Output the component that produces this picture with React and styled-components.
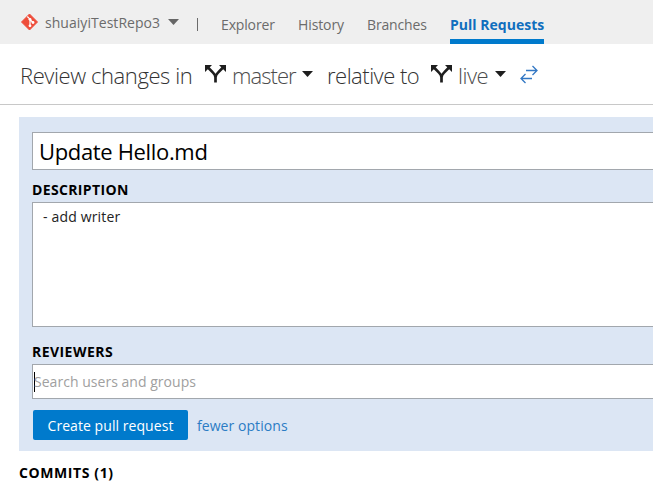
import React from "react";
import styled, { createGlobalStyle } from "styled-components";

const GlobalStyle = createGlobalStyle`
  * { box-sizing: border-box; }
  body {
    margin: 0;
    background: #fff;
    color: #000;
    font: 14px/20px "Open Sans", "Noto Sans", sans-serif;
    overflow: hidden;
  }
`;

const Page = styled.div`
  height: 493px;
  overflow: hidden;
`;

const TopBar = styled.header`
  display: flex;
  height: 44px;
  padding-left: 21px;
  background: #efefef;
  color: #6b6b6b;
  white-space: nowrap;
`;

const RepoPicker = styled.div`
  display: flex;
  width: 175px;
  padding-top: 13px;
  svg { flex: none; }
`;

const RepoName = styled.span`
  width: 123px;
  margin-left: 7px;
  letter-spacing: 0.04px;
  line-height: 20px;
`;

const RepoCaret = styled.svg`
  margin-top: 6px;
`;

const Divider = styled.span`
  width: 1px;
  height: 13px;
  margin: 18px 23px 0 1px;
  background: #6b6b6b;
`;

const Tab = styled.a`
  width: ${(p) => p.$width}px;
  height: 44px;
  margin-right: 23px;
  padding-top: 15px;
  letter-spacing: ${(p) => p.$tracking}px;
  color: ${(p) => (p.$active ? "#106ebe" : "#6b6b6b")};
  font-weight: ${(p) => (p.$active ? 700 : 400)};
  border-bottom: ${(p) => (p.$active ? "5px solid #007acc" : "0")};
`;

const CompareBar = styled.h1`
  display: flex;
  height: 61px;
  margin: 0;
  padding: 15px 0 0 20px;
  border-bottom: 1px solid #c8c8c8;
  font-size: 22px;
  line-height: 32px;
  font-weight: 300;
  color: #333;
  white-space: nowrap;
  svg { flex: none; }
`;

const Phrase = styled.span`
  width: ${(p) => p.$width}px;
  letter-spacing: ${(p) => p.$tracking}px;
`;

const BranchName = styled(Phrase)`
  color: #4c4c4c;
`;

const BranchSvg = styled.svg`
  margin: 6px 6px 0 0;
`;

const BranchCaret = styled.svg`
  margin: 12px 14px 0 0;
`;

const SwapSvg = styled.svg`
  margin-top: 6px;
`;

const Panel = styled.section`
  height: 334px;
  margin: 12px 0 0 19px;
  padding: 15px 0 0 13px;
  background: #dce6f4;
`;

const Field = styled.div`
  height: ${(p) => p.$height}px;
  background: #fff;
  border: 1px solid #a2a7ad;
  border-right: 0;
  white-space: nowrap;
`;

const TitleField = styled(Field)`
  padding-left: 6px;
  font-size: 22px;
  line-height: 36px;
  letter-spacing: -0.34px;
`;

const DescriptionField = styled(Field)`
  padding: 4px 10px;
  color: #222;
  letter-spacing: 0.17px;
`;

const SearchField = styled(Field)`
  display: flex;
  align-items: center;
  padding-left: 1px;
  color: #a0a0a0;
  letter-spacing: 0.03px;
`;

const TextCursor = styled.span`
  width: 1px;
  height: 20px;
  margin-right: -1px;
  background: #000;
`;

const Label = styled.h2`
  margin: 0;
  height: ${(p) => p.$height}px;
  padding-top: ${(p) => p.$top}px;
  font-size: 14px;
  line-height: 20px;
  font-weight: 700;
  letter-spacing: ${(p) => p.$tracking}px;
`;

const Actions = styled.div`
  display: flex;
  align-items: center;
  gap: 9px;
  padding: 11px 0 0 1px;
`;

const PrimaryButton = styled.button`
  width: 155px;
  height: 30px;
  padding: 2px 0 0;
  border: 0;
  border-radius: 2px;
  background: #007acc;
  color: #fff;
  font: inherit;
  letter-spacing: 0.06px;
`;

const OptionsLink = styled.a`
  padding-top: 2px;
  color: #2b7cc4;
  letter-spacing: 0.06px;
`;

const Commits = styled.section`
  padding-left: 19px;
`;

const GitLogo = () => (
  <svg width="17" height="18" viewBox="0 0 17 18">
    <path d="M8.5 1 16.5 9 8.5 17 .5 9Z" fill="#ee4d3a" stroke="#ee4d3a" strokeLinejoin="round" />
    <path d="M6.3 3.5 9 6.2V13M9 6.5l3 3" fill="none" stroke="#fff" strokeWidth="1.2" />
    <circle cx="9" cy="6.3" r="1.4" fill="#fff" />
    <circle cx="9" cy="12.8" r="1.4" fill="#fff" />
    <circle cx="12" cy="9.5" r="1.4" fill="#fff" />
  </svg>
);

const BranchIcon = () => (
  <BranchSvg width="21" height="18" viewBox="0 0 21 18">
    <path d="M3 2.5 8 7.6Q10.5 10 10.5 12.5V17.5M18 2.5 13 7.6Q10.5 10 10.5 12.5" fill="none" stroke="#1e1e1e" strokeWidth="2.7" />
    <path d="M0 0h7L0 7ZM21 0h-7l7 7Z" fill="#1e1e1e" />
  </BranchSvg>
);

const Caret = () => (
  <BranchCaret width="11" height="6" viewBox="0 0 11 6">
    <path d="M0 0h11L5.5 6Z" fill="#1e1e1e" />
  </BranchCaret>
);

export default function App() {
  return (
    <Page>
      <GlobalStyle />
      <TopBar>
        <RepoPicker>
          <GitLogo />
          <RepoName>shuaiyiTestRepo3</RepoName>
          <RepoCaret width="11" height="6" viewBox="0 0 11 6">
            <path d="M0 0h11L5.5 6Z" fill="#666" />
          </RepoCaret>
        </RepoPicker>
        <Divider />
        <Tab $width={54} $tracking={-0.15}>Explorer</Tab>
        <Tab $width={46} $tracking={-0.1}>History</Tab>
        <Tab $width={60} $tracking={-0.15}>Branches</Tab>
        <Tab $width={94} $tracking={0.02} $active>Pull Requests</Tab>
      </TopBar>
      <CompareBar>
        <Phrase $width={185} $tracking={-0.42}>Review changes in</Phrase>
        <BranchIcon />
        <BranchName $width={70} $tracking={-0.95}>master</BranchName>
        <Caret />
        <Phrase $width={104} $tracking={-0.5}>relative to</Phrase>
        <BranchIcon />
        <BranchName $width={37} $tracking={-0.5}>live</BranchName>
        <Caret />
        <SwapSvg width="18" height="19" viewBox="0 0 18 19">
          <path d="M6 5.5H17M12.5 1 17 5.5 12.5 10M12 13.5H1M5.5 9 1 13.5 5.5 18" fill="none" stroke="#3277c4" strokeWidth="1.3" />
        </SwapSvg>
      </CompareBar>
      <Panel>
        <TitleField $height={38}>Update Hello.md</TitleField>
        <Label $height={32} $top={10} $tracking={0.35}>DESCRIPTION</Label>
        <DescriptionField $height={125}>- add writer</DescriptionField>
        <Label $height={37} $top={15} $tracking={0.45}>REVIEWERS</Label>
        <SearchField $height={35}>
          <TextCursor />
          Search users and groups
        </SearchField>
        <Actions>
          <PrimaryButton>Create pull request</PrimaryButton>
          <OptionsLink>fewer options</OptionsLink>
        </Actions>
      </Panel>
      <Commits>
        <Label $height={42} $top={12} $tracking={0.6}>COMMITS (1)</Label>
      </Commits>
    </Page>
  );
}
